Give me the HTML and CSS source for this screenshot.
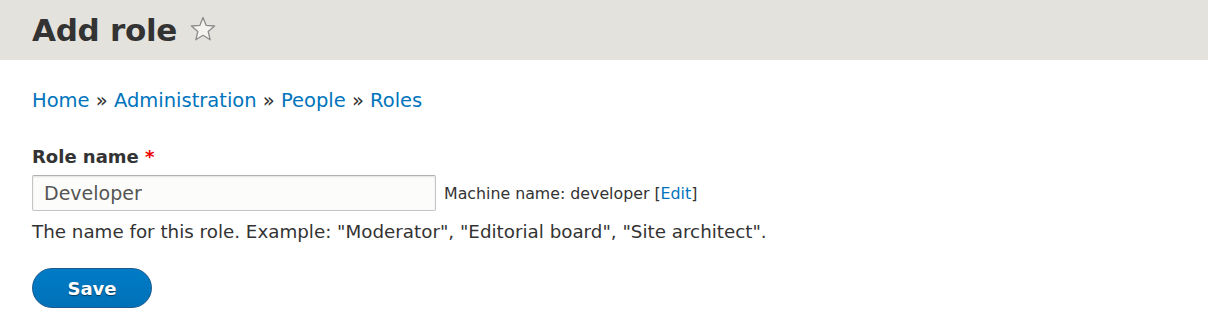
FILE: index.html
```html
<!DOCTYPE html>
<html lang="en">
<head>
    <meta charset="UTF-8">
    <title>Add role</title>
    <link rel="stylesheet" href="styles.css">
</head>
<body>
<div class="page-header">
    <h1 class="page-title">Add role
        <a href="javascript:void(0)" class="shortcut" title="Add to shortcuts">
            <svg width="28" height="28" viewBox="0 0 28 28">
                <path d="M14 2.5 L17.2 10.4 L25.6 11 L19.2 16.5 L21.2 24.8 L14 20.3 L6.8 24.8 L8.8 16.5 L2.4 11 L10.8 10.4 Z"
                      fill="#f4f3f0" stroke="#8c8c8c" stroke-width="1.3" stroke-linejoin="round"/>
            </svg>
        </a>
    </h1>
</div>
<div class="content">
    <div class="breadcrumb">
        <a href="javascript:void(0)">Home</a> » <a href="javascript:void(0)">Administration</a> »
        <a href="javascript:void(0)">People</a> » <a href="javascript:void(0)">Roles</a>
    </div>
    <form class="role-form">
        <div class="form-item">
            <label for="role-name">Role name <span class="required">*</span></label>
            <div class="field-row">
                <input type="text" id="role-name" class="form-text" value="Developer"/>
                <span class="machine-name">Machine name: developer [<a href="javascript:void(0)">Edit</a>]</span>
            </div>
            <div class="description">The name for this role. Example: "Moderator", "Editorial board", "Site architect".</div>
        </div>
        <div class="form-actions">
            <button type="button" class="button-primary">Save</button>
        </div>
    </form>
</div>
</body>
</html>
```

FILE: styles.css
```css
*{
    margin: 0;
    padding: 0;
    box-sizing: border-box;
}
body{
    font-family: "DejaVu Sans", "Liberation Sans", sans-serif;
    color: #333;
    background: #fff;
}
a{
    text-decoration: none;
    color: #0074bd;
}
.page-header{
    background: #e4e2dc;
    height: 60px;
    padding: 0 32px;
    display: flex;
    align-items: center;
}
.page-title{
    font-size: 31px;
    font-weight: bold;
    color: #333;
    display: flex;
    align-items: center;
    gap: 12px;
    letter-spacing: -0.3px;
}
.shortcut{
    display: flex;
    margin-top: -2px;
}
.content{
    padding: 28px 32px 0 32px;
}
.breadcrumb{
    font-size: 19.5px;
    color: #333;
    line-height: 26px;
}
.role-form{
    margin-top: 31px;
}
.form-item label{
    display: block;
    font-size: 18px;
    font-weight: bold;
    line-height: 24px;
    color: #333;
}
.required{
    color: #e00;
}
.field-row{
    display: flex;
    align-items: center;
    gap: 8px;
    margin-top: 6px;
}
.form-text{
    width: 404px;
    height: 36px;
    border: 1px solid #c4c4c4;
    border-top-color: #b0b0b0;
    border-radius: 2px;
    padding: 0 11px;
    font: 19px "DejaVu Sans", sans-serif;
    color: #555;
    background: #fcfcfa;
    box-shadow: inset 0 1px 2px rgba(0, 0, 0, 0.1);
}
.machine-name{
    font-size: 15.8px;
    color: #333;
}
.description{
    font-size: 18.3px;
    color: #333;
    line-height: 24px;
    margin-top: 9px;
}
.form-actions{
    margin-top: 24px;
}
.button-primary{
    width: 120px;
    height: 40px;
    border-radius: 20px;
    border: 1px solid #1e5c90;
    background: linear-gradient(#007bc6, #0071b8);
    color: #fff;
    font: bold 18px "DejaVu Sans", sans-serif;
    text-shadow: 0 1px 1px rgba(0, 0, 0, 0.5);
}
```
